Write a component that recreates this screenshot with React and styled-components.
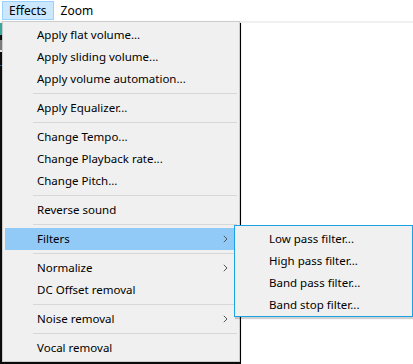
import React from 'react';
import styled, { createGlobalStyle } from 'styled-components';

const Global = createGlobalStyle`
  html, body { margin: 0; padding: 0; background: #fff; }
  body { font-family: "Noto Sans", "Open Sans", sans-serif; font-size: 11.5px; color: #000; }
  #root { width: 413px; height: 364px; }
`;

const Window = styled.div`
  position: relative;
  width: 413px;
  height: 364px;
  overflow: hidden;
  display: flex;
  flex-direction: column;
  background: #fff;
`;

const MenuBar = styled.div`
  display: flex;
  align-items: center;
  height: 21px;
  padding-left: 2px;
  border-bottom: 2px solid #f0f0f0;
  box-sizing: content-box;
`;

const BarItem = styled.div`
  height: 19px;
  line-height: 17px;
  padding: 0 6px;
  border: 1px solid ${p => (p.$open ? '#99d1ff' : 'transparent')};
  background: ${p => (p.$open ? '#cce8ff' : 'transparent')};
  box-sizing: border-box;
  font-size: 12px;
`;

const Workspace = styled.div`
  flex: 1;
  display: flex;
`;

const WavePane = styled.div`
  width: 241px;
  box-sizing: border-box;
  border-right: 1px solid #000;
  background: linear-gradient(
    to bottom,
    #3aa89c 0px, #3aa89c 12px,
    #101010 12px, #101010 17px,
    #7a7a7a 17px, #7a7a7a 27px,
    #e0e0e0 27px, #e0e0e0 29px,
    #0c0c0c 29px, #0c0c0c 42px,
    #2050a0 42px, #2050a0 43px,
    #0c0c0c 43px
  );
`;

const Blank = styled.div`
  flex: 1;
  background: #fff;
`;

const Dropdown = styled.div`
  position: absolute;
  top: 21px;
  left: 2px;
  width: 238px;
  box-sizing: border-box;
  background: #f0f0f0;
  border: 1px solid #cccccc;
  padding: 2px;
  box-shadow: 1px 1px 2px rgba(0, 0, 0, 0.15);
`;

const Item = styled.div`
  position: relative;
  height: 22px;
  line-height: 22px;
  padding-left: 32px;
  white-space: nowrap;
  background: ${p => (p.$active ? '#91c9f7' : 'transparent')};
`;

const Chevron = styled.svg`
  position: absolute;
  right: 9px;
  top: 7px;
  width: 5px;
  height: 8px;
`;

const Separator = styled.div`
  height: 7px;
  margin-left: 28px;
  display: flex;
  align-items: center;
  &::after {
    content: '';
    flex: 1;
    height: 1px;
    background: #d7d7d7;
  }
`;

const Submenu = styled.div`
  position: absolute;
  left: 229px;
  top: -3px;
  width: 179px;
  box-sizing: border-box;
  background: #f0f0f0;
  border: 1px solid #1ba1e6;
  padding: 2px 2px 0 2px;
  box-shadow: 1px 2px 1px rgba(0, 0, 0, 0.18);
  z-index: 2;
`;

const SubItem = styled.div`
  height: 22px;
  line-height: 22px;
  padding-left: 32px;
  white-space: nowrap;
`;

const Arrow = () => (
  <Chevron viewBox="0 0 5 8">
    <path d="M0.8 0.8 L4 4 L0.8 7.2" fill="none" stroke="#555" strokeWidth="1" />
  </Chevron>
);

const menu = [
  ['Apply flat volume...'],
  ['Apply sliding volume...'],
  ['Apply volume automation...'],
  '-',
  ['Apply Equalizer...'],
  '-',
  ['Change Tempo...'],
  ['Change Playback rate...'],
  ['Change Pitch...'],
  '-',
  ['Reverse sound'],
  '-',
  ['Filters', 'sub', true],
  '-',
  ['Normalize', 'sub'],
  ['DC Offset removal'],
  '-',
  ['Noise removal', 'sub'],
  '-',
  ['Vocal removal'],
];

const filters = ['Low pass filter...', 'High pass filter...', 'Band pass filter...', 'Band stop filter...'];

export default function App() {
  return (
    <Window>
      <Global />
      <MenuBar>
        <BarItem $open>Effects</BarItem>
        <BarItem>Zoom</BarItem>
      </MenuBar>
      <Workspace>
        <WavePane />
        <Blank />
      </Workspace>
      <Dropdown>
        {menu.map((m, i) =>
          m === '-' ? (
            <Separator key={i} />
          ) : (
            <Item key={i} $active={m[2]}>
              {m[0]}
              {m[1] && <Arrow />}
              {m[2] && (
                <Submenu>
                  {filters.map(f => (
                    <SubItem key={f}>{f}</SubItem>
                  ))}
                </Submenu>
              )}
            </Item>
          )
        )}
      </Dropdown>
    </Window>
  );
}
